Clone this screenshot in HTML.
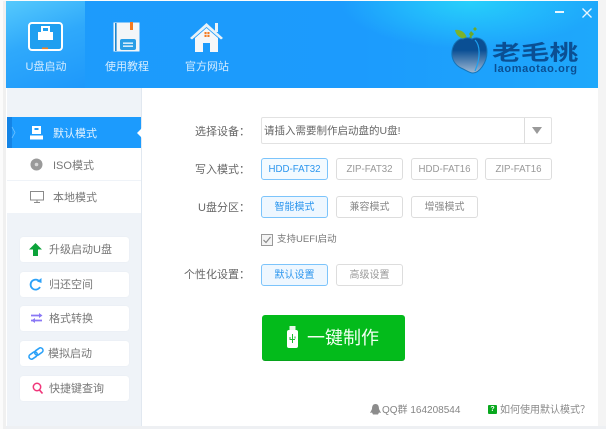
<!DOCTYPE html>
<html><head><meta charset="utf-8">
<style>
html,body{margin:0;padding:0}
body{width:606px;height:429px;position:relative;overflow:hidden;background:#fbfbfb;font-family:"Liberation Sans","Noto Sans CJK SC",sans-serif;color:#666}
#w{left:0;top:0;width:606px;height:429px;filter:blur(.35px)}
div,span{position:absolute;box-sizing:border-box}
svg{position:absolute;overflow:visible}
.t{white-space:nowrap;line-height:14px;font-size:11px}
.hl{color:#d4ecff;font-size:11px;text-align:center;white-space:nowrap;line-height:14px;top:60px}
.lab{left:172px;width:78px;text-align:right;font-size:11px;color:#666;line-height:14px;white-space:nowrap}
.b{background:#fff;border:1px solid #ddd;border-radius:3px;text-align:center;font-size:9.7px;color:#999;white-space:nowrap}
.b.on{background:#eef7ff;border-color:#7cc4fb;color:#2c96ee}
.s{left:20px;width:109px;height:25px;background:#fff;border-radius:3px;box-shadow:0 0 1px #dfe5ea}
.st{left:49px;font-size:11px;line-height:14px;color:#777;white-space:nowrap;letter-spacing:0}
</style></head><body><div id="w">
<div style="left:3px;top:1px;width:3px;height:428px;background:#f0f0f0"></div>
<div style="left:598px;top:0;width:8px;height:429px;background:#f4f4f4"></div>
<div style="left:6px;top:426px;width:600px;height:3px;background:#eef0f3"></div>
<div style="left:6px;top:88px;width:592px;height:338px;background:#fff"></div>

<div style="left:6px;top:1px;width:592px;height:87px;background:linear-gradient(90deg,#1d9bfb 0%,#1c9bfd 60%,#1ea8fb 100%)"></div>
<div style="left:300px;top:1px;width:298px;height:50px;background:radial-gradient(ellipse 130px 48px at 170px 0,#27d0fb 0%,rgba(30,170,250,0) 100%)"></div>
<div style="left:6px;top:1px;width:79px;height:87px;background:linear-gradient(160deg,#55c9fc 0%,#2fa9fb 45%,#1d98fb 100%)"></div>

<svg style="left:28px;top:22px" width="35" height="29" viewBox="0 0 35 29"><rect x="1" y="1" width="33" height="27" rx="3" fill="#1f9ff0" stroke="#fff" stroke-width="2"/><path d="M13 4h9v6h3v8H10v-8h3z" fill="#fff"/><rect x="15" y="6" width="5" height="3" fill="#1f9ff0"/><rect x="14" y="25.500" width="6" height="1.600" fill="#f08020"/></svg>
<div class="hl" style="left:19px;width:54px">U盘启动</div>

<svg style="left:113px;top:22px" width="27" height="30" viewBox="0 0 27 30"><rect x="0.500" y="0.500" width="26" height="29" fill="#f3f6f8"/><rect x="2" y="1" width="1.600" height="28" fill="#1c86d0"/><rect x="17" y="0" width="3" height="8" fill="#f47a20"/><rect x="7" y="17" width="16" height="11" rx="2" fill="#2a9ee6"/><rect x="10" y="20.500" width="10" height="1.300" fill="#fff"/><rect x="10" y="23.500" width="10" height="1.300" fill="#fff"/></svg>
<div class="hl" style="left:100px;width:54px">使用教程</div>

<svg style="left:190px;top:22px" width="33" height="30" viewBox="0 0 33 30"><path d="M0 16 16.500 1 33 16 31 17.500 16.500 5 2 17.500z" fill="#e8f2f8"/><rect x="25" y="1" width="3" height="9" fill="#e8f2f8"/><path d="M5 16 16.500 6 28 16v14H20V21H13v9H5z" fill="#f5f7f9"/><rect x="14.500" y="10" width="5" height="5" fill="#f47a20"/><path d="M17 10v5M14.500 12.500h5" stroke="#f5f7f9" stroke-width=".8"/></svg>
<div class="hl" style="left:180px;width:54px">官方网站</div>

<div style="left:555px;top:11px;width:9px;height:2px;background:#e8f6ff"></div>
<svg style="left:582px;top:8px" width="10" height="10" viewBox="0 0 10 10"><path d="M.5.500l9 9M9.500.500l-9 9" stroke="#e8f6ff" stroke-width="1.300" fill="none"/></svg>

<svg style="left:450px;top:26px" width="40" height="50" viewBox="0 0 40 50"><defs><linearGradient id="p" x1="0" y1="0" x2="0" y2="1"><stop offset=".35" stop-color="#0a4f94"/><stop offset="1" stop-color="#9fb9d4"/></linearGradient></defs><path d="M5 4c5-1 11 2 12 9C11 13 6 10 5 4z" fill="#7cb32b"/><path d="M21 5l3 3-3 3-2-3zM25 1l2 2-2 2-2-2zM20 10l2 1-1 2-2-1z" fill="#6da828"/><path d="M13 13c4-2 7-1 9 0 6-3 15 0 15 13 0 11-8 21-14 21-4 0-7-3-12-5C5 39 1 33 2 25 3 17 9 12 13 13z" fill="url(#p)" stroke="#1474b8" stroke-width="1"/><path d="M25 14c5 5 6 17 0 31" stroke="#1da0f0" stroke-width="1.200" fill="none"/></svg>
<div style="left:492px;top:39px;font-size:21px;line-height:26px;font-weight:bold;color:#0b4f93;white-space:nowrap;transform:scaleX(1.37);transform-origin:0 0;font-family:'Noto Sans CJK SC',sans-serif">老毛桃</div>
<div style="left:494px;top:63px;font-size:11px;line-height:13px;font-weight:bold;color:#0b4f93;white-space:nowrap;letter-spacing:.6px">laomaotao.org</div>

<div style="left:7px;top:88px;width:135px;height:338px;background:#eff3f8;border-right:1px solid #e1e8f0"></div>
<div style="left:7px;top:117px;width:134px;height:31px;background:#1c9bfd"></div>
<div style="left:7px;top:117px;width:5px;height:31px;background:#1484e6"></div>
<svg style="left:12px;top:127px" width="4" height="11" viewBox="0 0 4 11"><path d="M0 0l3 5.500L0 11" fill="none" stroke="#6cc0ff" stroke-width=".8"/></svg>
<svg style="left:137px;top:128px" width="5" height="10" viewBox="0 0 5 10"><path d="M5 0v10L0 5z" fill="#fff"/></svg>
<div style="left:7px;top:148px;width:134px;height:32px;background:#fff"></div>
<div style="left:7px;top:181px;width:134px;height:32px;background:#fff"></div>
<svg style="left:29px;top:126px" width="15" height="14" viewBox="0 0 15 14"><path d="M3 0h9v8H3z" fill="#fff"/><rect x="5.500" y="2" width="4" height="2" fill="#1c9bfd"/><rect x="1" y="9.500" width="13" height="4" fill="#fff"/></svg>
<div class="st" style="left:53px;top:127px;color:#e4f3ff">默认模式</div>
<svg style="left:30px;top:158px" width="13" height="13" viewBox="0 0 13 13"><circle cx="6.500" cy="6.500" r="6" fill="#9a9a9a"/><circle cx="6.500" cy="6.500" r="1.800" fill="#d8d8d8"/></svg>
<div class="st" style="left:53px;top:159px">ISO模式</div>
<svg style="left:30px;top:191px" width="14" height="12" viewBox="0 0 14 12"><rect x=".5" y=".5" width="13" height="8.500" fill="#fff" stroke="#8a8a8a"/><path d="M4 11.500h6M7 9v2" stroke="#8a8a8a"/></svg>
<div class="st" style="left:53px;top:191px">本地模式</div>

<div class="s" style="top:237px"></div>
<svg style="left:29px;top:243px" width="13" height="13" viewBox="0 0 13 13"><path d="M6.500 0 13 6.500H9V13H4V6.500H0z" fill="#0ca33a"/></svg>
<div class="st" style="top:243px">升级启动U盘</div>
<div class="s" style="top:272px"></div>
<svg style="left:29px;top:278px" width="13" height="13" viewBox="0 0 13 13"><path d="M10.500 3.500A5 5 0 1 0 11 9" fill="none" stroke="#2ba1f8" stroke-width="1.800"/><path d="M8 3.500 12.500 5V0z" fill="#2ba1f8"/></svg>
<div class="st" style="top:278px">归还空间</div>
<div class="s" style="top:306px"></div>
<svg style="left:31px;top:312px" width="12" height="12" viewBox="0 0 12 12"><path d="M0 3.500h10M0 8.500h11" stroke="#8a78f5" stroke-width="1.700"/><path d="M8 1l3.500 2.500L8 6zM4 6 .5 8.500 4 11z" fill="#8a78f5"/></svg>
<div class="st" style="top:312px">格式转换</div>
<div class="s" style="top:341px"></div>
<svg style="left:28px;top:347px" width="16" height="13" viewBox="0 0 16 13"><g fill="none" stroke="#2ba1f8" stroke-width="1.600" transform="rotate(-35 8 6.500)"><rect x="0" y="4" width="9" height="5" rx="2.500"/><rect x="7" y="4" width="9" height="5" rx="2.500"/></g></svg>
<div class="st" style="left:48px;top:347px">模拟启动</div>
<div class="s" style="top:376px"></div>
<svg style="left:32px;top:382px" width="12" height="13" viewBox="0 0 12 13"><circle cx="5" cy="5" r="3.700" fill="none" stroke="#f0367a" stroke-width="1.500"/><path d="M7.500 8 10.500 11.500" stroke="#f0367a" stroke-width="1.700"/></svg>
<div class="st" style="top:382px">快捷键查询</div>

<div class="lab" style="top:125px">选择设备：</div>
<div style="left:261px;top:117px;width:291px;height:27px;background:#fff;border:1px solid #e2e2e2;border-radius:2px"></div>
<div style="left:524px;top:118px;width:1px;height:25px;background:#ddd"></div>
<div class="t" style="left:264px;top:124px;font-size:10.500px;color:#666">请插入需要制作启动盘的U盘!</div>
<svg style="left:532px;top:127px" width="10" height="7" viewBox="0 0 10 7"><path d="M0 0h10L5 7z" fill="#9a9a9a"/></svg>

<div class="lab" style="top:163px">写入模式：</div>
<div class="b on" style="left:261px;top:158px;width:67px;height:22px;line-height:22px;background:#f3faff">HDD-FAT32</div>
<div class="b" style="left:336px;top:158px;width:67px;height:22px;line-height:22px">ZIP-FAT32</div>
<div class="b" style="left:411px;top:158px;width:67px;height:22px;line-height:22px">HDD-FAT16</div>
<div class="b" style="left:485px;top:158px;width:67px;height:22px;line-height:22px">ZIP-FAT16</div>

<div class="lab" style="top:201px">U盘分区：</div>
<div class="b on" style="left:261px;top:196px;width:67px;height:22px;line-height:21px;font-size:10px">智能模式</div>
<div class="b" style="left:336px;top:196px;width:67px;height:22px;line-height:21px;font-size:10px;color:#888">兼容模式</div>
<div class="b" style="left:411px;top:196px;width:67px;height:22px;line-height:21px;font-size:10px;color:#888">增强模式</div>

<div style="left:261px;top:234px;width:12px;height:12px;border:1px solid #999;background:#f4f4f4"></div>
<svg style="left:263px;top:236px" width="8" height="8" viewBox="0 0 8 8"><path d="M.5 4l2.500 2.500L7.500 1" fill="none" stroke="#888" stroke-width="1.200"/></svg>
<div class="t" style="left:277px;top:233px;font-size:9.500px;color:#777">支持UEFI启动</div>

<div class="lab" style="top:268px">个性化设置：</div>
<div class="b on" style="left:261px;top:264px;width:67px;height:22px;line-height:21px;font-size:10px">默认设置</div>
<div class="b" style="left:336px;top:264px;width:67px;height:22px;line-height:21px;font-size:10px">高级设置</div>

<div style="left:262px;top:315px;width:143px;height:46px;background:#03bb1b;border-radius:3px;border-bottom:1px solid #07a31c"></div>
<svg style="left:287px;top:326px" width="11" height="22" viewBox="0 0 11 22"><rect x="2.500" y="0" width="6" height="5" fill="#e8f8ea"/><rect x="0" y="4" width="11" height="18" rx="2" fill="#fff"/><path d="M5.500 8v9M3 11v2.500h5M8 10.500v2" stroke="#1bbc30" stroke-width="1" fill="none"/></svg>
<div style="left:307px;top:325px;font-size:18px;line-height:26px;color:#f2fff2;white-space:nowrap">一键制作</div>

<svg style="left:370px;top:404px" width="11" height="11" viewBox="0 0 11 11"><path d="M5.500 0C8 0 9 2 9 5l2 4-2-.5L8 10.500H3L2 8.500 0 9l2-4C2 2 3 0 5.500 0z" fill="#8c8c8c"/></svg>
<div class="t" style="left:382px;top:404px;font-size:10px;color:#858585">QQ群 164208544</div>
<div style="left:488px;top:405px;width:9px;height:9px;background:#09a81e;border-radius:1px;color:#fff;font-size:7px;line-height:9px;text-align:center;font-weight:bold">?</div>
<div class="t" style="left:500px;top:404px;font-size:10px;color:#8a8a8a">如何使用默认模式？</div>
</div></body></html>
